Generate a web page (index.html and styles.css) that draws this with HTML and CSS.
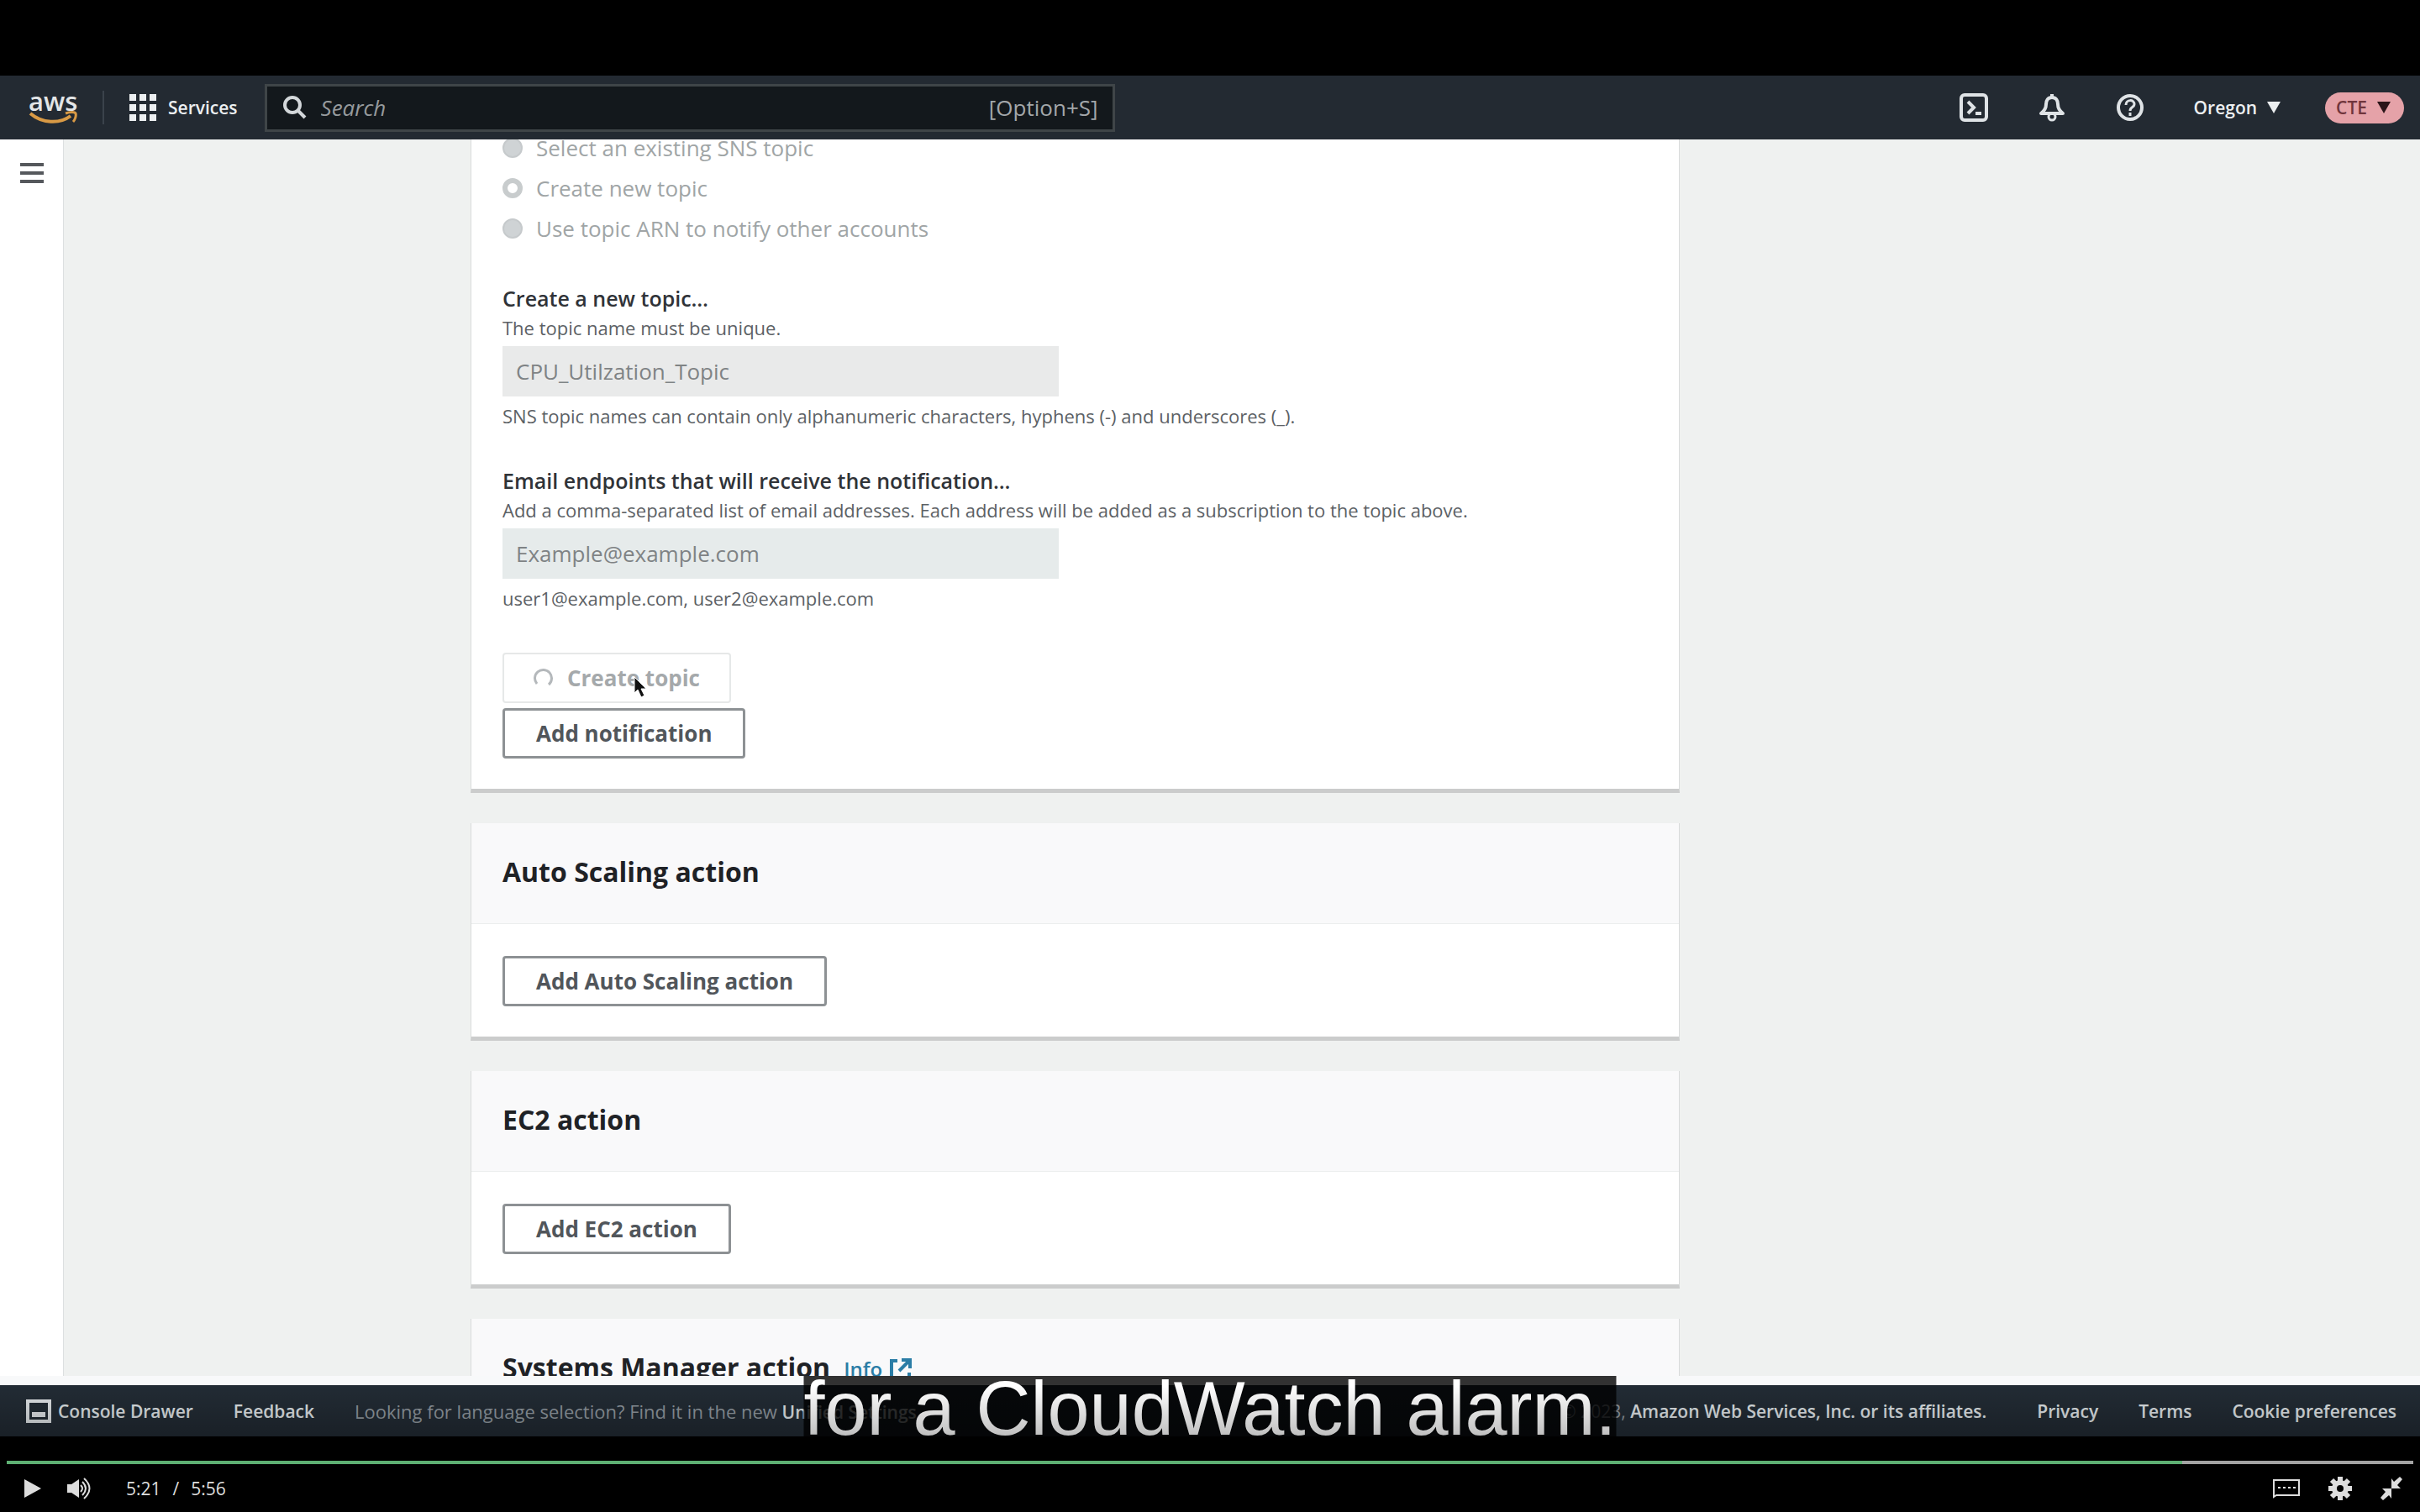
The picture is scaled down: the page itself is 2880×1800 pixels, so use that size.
FILE: index.html
```html
<!DOCTYPE html>
<html lang="en">
<head>
<meta charset="utf-8">
<title>CloudWatch alarm – video player</title>
<link rel="stylesheet" href="styles.css">
</head>
<body>
<div class="player">
  <div class="stage">
    <header class="nav">
      <a class="logo" href="#" aria-label="AWS home">
        <span class="logo-text">aws</span>
        <svg class="logo-smile" viewBox="0 0 58 16" aria-hidden="true"><path d="M2 3C16 15 37 16 50 6" fill="none" stroke="#d99a45" stroke-width="4"/><path d="M44 3c5-2 11-2 12 0 1 3-1 8-3 10" fill="none" stroke="#d99a45" stroke-width="3"/></svg>
      </a>
      <span class="nav-divider"></span>
      <button class="nav-button services" type="button">
        <svg width="32" height="32" viewBox="0 0 32 32" fill="#eceff1" aria-hidden="true"><path d="M0 0h8v8H0zM12 0h8v8h-8zM24 0h8v8h-8zM0 12h8v8H0zM12 12h8v8h-8zM24 12h8v8h-8zM0 24h8v8H0zM12 24h8v8h-8zM24 24h8v8h-8z"/></svg>
        Services
      </button>
      <label class="search">
        <svg width="30" height="30" viewBox="0 0 30 30" fill="none" stroke="#d3d7da" stroke-width="4" aria-hidden="true"><circle cx="12" cy="12" r="9"/><path d="M18 18l9 9"/></svg>
        <input class="search-input" type="text" placeholder="Search" aria-label="Search">
        <span class="search-key">[Option+S]</span>
      </label>
      <div class="nav-tools">
        <button class="nav-button" type="button" aria-label="CloudShell">
          <svg width="34" height="34" viewBox="0 0 34 34" fill="none" stroke="#dfe3e6" stroke-width="4" aria-hidden="true"><rect x="2" y="2" width="30" height="30" rx="4"/><path d="M10 10l7 7-7 7" stroke-width="4"/><path d="M19 24h7" stroke-width="4"/></svg>
        </button>
        <button class="nav-button" type="button" aria-label="Notifications">
          <svg width="34" height="34" viewBox="0 0 34 34" fill="none" stroke="#dfe3e6" stroke-width="4" stroke-linejoin="round" aria-hidden="true"><path d="M17 1v4M17 5c-5 0-7 4-7 8 0 5-2 8-6 11h26c-4-3-6-6-6-11 0-4-2-8-7-8z"/><circle cx="17" cy="28" r="4" stroke-width="3"/></svg>
        </button>
        <button class="nav-button" type="button" aria-label="Help">
          <svg width="34" height="34" viewBox="0 0 34 34" fill="none" stroke="#dfe3e6" stroke-width="4" aria-hidden="true"><circle cx="17" cy="17" r="14"/><path d="M12 14c0-7 10-7 10-1 0 4-5 3-5 8" stroke-width="3"/><path d="M17 23v4" stroke-width="3"/></svg>
        </button>
        <button class="nav-button region" type="button">Oregon
          <svg width="16" height="14" viewBox="0 0 16 14" fill="#eceff1" aria-hidden="true"><path d="M0 0h16L8 14z"/></svg>
        </button>
        <button class="nav-button account" type="button">CTE
          <svg width="16" height="14" viewBox="0 0 16 14" fill="#2a1418" aria-hidden="true"><path d="M0 0h16L8 14z"/></svg>
        </button>
      </div>
    </header>

    <div class="workspace">
      <aside class="rail">
        <button class="menu" type="button" aria-label="Open navigation">
          <svg width="28" height="26" viewBox="0 0 28 26" stroke="#55585c" stroke-width="4" aria-hidden="true"><path d="M0 3h28M0 13h28M0 23h28"/></svg>
        </button>
      </aside>
      <main class="content">
        <div class="cards">
          <section class="card notification">
            <div class="radios">
              <label class="radio-row"><input class="radio" type="radio" name="topic" disabled>Select an existing SNS topic</label>
              <label class="radio-row"><input class="radio" type="radio" name="topic" checked disabled>Create new topic</label>
              <label class="radio-row"><input class="radio" type="radio" name="topic" disabled>Use topic ARN to notify other accounts</label>
            </div>
            <div class="field">
              <label class="field-label" for="topic-name">Create a new topic…</label>
              <p class="field-note">The topic name must be unique.</p>
              <input class="field-input" id="topic-name" type="text" value="CPU_Utilzation_Topic" disabled>
              <p class="field-hint">SNS topic names can contain only alphanumeric characters, hyphens (-) and underscores (_).</p>
            </div>
            <div class="field">
              <label class="field-label" for="emails">Email endpoints that will receive the notification…</label>
              <p class="field-note">Add a comma-separated list of email addresses. Each address will be added as a subscription to the topic above.</p>
              <input class="field-input tinted" id="emails" type="text" value="Example@example.com" disabled>
              <p class="field-hint">user1@example.com, user2@example.com</p>
            </div>
            <div class="actions">
              <button class="button loading" type="button" disabled>
                <svg width="24" height="24" viewBox="0 0 24 24" fill="none" stroke="#b4b8bb" stroke-width="3" aria-hidden="true"><path d="M4 19A10 10 0 1 1 18 20"/></svg>
                Create topic
                <svg class="cursor" width="16" height="26" viewBox="0 0 16 26" aria-hidden="true"><path d="M1 1v19l4-4 4 9 4-2-4-8h6z" fill="#111" stroke="#fff" stroke-width="1"/></svg>
              </button>
              <button class="button" type="button">Add notification</button>
            </div>
          </section>
          <section class="card">
            <div class="card-head"><h2 class="card-title">Auto Scaling action</h2></div>
            <div class="card-body"><button class="button" type="button">Add Auto Scaling action</button></div>
          </section>
          <section class="card">
            <div class="card-head"><h2 class="card-title">EC2 action</h2></div>
            <div class="card-body"><button class="button" type="button">Add EC2 action</button></div>
          </section>
          <section class="card">
            <div class="card-head">
              <h2 class="card-title">Systems Manager action</h2>
              <a class="info" href="#">Info
                <svg width="28" height="28" viewBox="0 0 28 28" fill="none" stroke="#2b7da6" stroke-width="4" aria-hidden="true"><path d="M10 4H3v21h21v-7M15 3h10v10M25 3L12 16"/></svg>
              </a>
            </div>
          </section>
        </div>
      </main>
    </div>

    <footer class="footer">
      <button class="drawer" type="button">
        <svg width="30" height="28" viewBox="0 0 30 28" fill="none" stroke="#dfe3e6" stroke-width="4" aria-hidden="true"><rect x="2" y="2" width="26" height="24"/><path d="M7 18h16" stroke-width="6"/></svg>
        Console Drawer
      </button>
      <a class="footer-link" href="#">Feedback</a>
      <p class="language">Looking for language selection? Find it in the new <a class="footer-link" href="#">Unified Settings</a></p>
      <p class="legal"><span class="year">© 2023,</span> Amazon Web Services, Inc. or its affiliates.</p>
      <a class="footer-link" href="#">Privacy</a>
      <a class="footer-link" href="#">Terms</a>
      <a class="footer-link" href="#">Cookie preferences</a>
    </footer>

    <p class="caption">for a CloudWatch alarm.</p>
    <div class="shade"></div>
  </div>

  <div class="controls">
    <input class="seek" type="range" min="0" max="100" value="90" aria-label="Seek" style="--played: 90.4%">
    <div class="control-row">
      <button class="control" type="button" aria-label="Play">
        <svg width="20" height="24" viewBox="0 0 20 24" fill="#ddd" aria-hidden="true"><path d="M0 1l20 11L0 23z"/></svg>
      </button>
      <button class="control volume" type="button" aria-label="Mute">
        <svg width="30" height="26" viewBox="0 0 30 26" fill="#ddd" aria-hidden="true"><path d="M0 8h5l9-6v22l-9-6H0z"/><g fill="none" stroke="#ddd" stroke-width="2"><path d="M16 9q4 4 0 8M18 5q8 8 0 16M20 1q13 12 0 24"/></g></svg>
      </button>
      <p class="time"><span>5:21</span><span>/</span><span>5:56</span></p>
      <button class="control captions" type="button" aria-label="Captions">
        <svg width="32" height="24" viewBox="0 0 32 24" aria-hidden="true"><path d="M1 22V2h30v18H4z" fill="none" stroke="#ddd" stroke-width="2"/><path d="M6 10h3v2H6zM12 10h3v2h-3zM18 10h3v2h-3zM24 10h3v2h-3z" fill="#ddd"/></svg>
      </button>
      <button class="control" type="button" aria-label="Settings">
        <svg width="28" height="28" viewBox="0 0 28 28" aria-hidden="true"><g stroke="#ddd" stroke-width="6"><path d="M14 0v28M0 14h28M4 4l20 20M24 4L4 24"/></g><circle cx="14" cy="14" r="10" fill="#ddd"/><circle cx="14" cy="14" r="4" fill="#000"/></svg>
      </button>
      <button class="control" type="button" aria-label="Exit full screen">
        <svg width="26" height="28" viewBox="0 0 26 28" fill="#ddd" aria-hidden="true"><path d="M13 2v12h11l-4-4 6-7-3-3-7 6zM13 26V14H2l4 4-6 7 3 3 7-6z"/></svg>
      </button>
    </div>
  </div>
</div>
</body>
</html>
```
FILE: styles.css
```css
* {
  box-sizing: border-box;
}

body {
  margin: 0;
  background: #000;
  font-family: "Open Sans", "Noto Sans", sans-serif;
  font-size: 26px;
}

p,
h2 {
  margin: 0;
}

button {
  margin: 0;
  font-family: inherit;
  cursor: pointer;
}

a {
  text-decoration: none;
}

svg {
  display: block;
  flex: none;
}

.player {
  display: flex;
  flex-direction: column;
  height: 100vh;
  padding-top: 90px;
  overflow: hidden;
}

.stage {
  position: relative;
  display: flex;
  flex: 1;
  flex-direction: column;
  min-height: 0;
}

/* Console navigation bar */
.nav {
  display: flex;
  align-items: center;
  height: 76px;
  padding: 0 19px 0 34px;
  background: #232a32;
}

.logo {
  display: flex;
  flex-direction: column;
  width: 58px;
  color: #e3e6e8;
}

.logo-text {
  font-size: 31px;
  font-weight: 600;
  line-height: 24px;
}

.logo-smile {
  width: 58px;
  height: 16px;
}

.nav-divider {
  width: 2px;
  height: 40px;
  margin: 0 30px;
  background: #3a424b;
}

.nav-button {
  display: flex;
  align-items: center;
  padding: 0;
  border: 0;
  background: none;
  color: #eceff1;
  font-size: 21px;
  font-weight: 600;
  line-height: 32px;
}

.services {
  gap: 14px;
}

.search {
  display: flex;
  flex: 0 1 1012px;
  align-items: center;
  height: 57px;
  margin-left: 32px;
  padding: 0 17px 0 18px;
  border: 3px solid #3f4548;
  background: #13181c;
  color: #a3a7aa;
}

.search-input {
  flex: 1;
  min-width: 0;
  margin-left: 16px;
  padding: 0;
  border: 0;
  outline: 0;
  background: none;
  color: inherit;
  font: inherit;
}

.search-input::placeholder {
  color: #969a9d;
  font-style: italic;
  opacity: 1;
}

.nav-tools {
  display: flex;
  align-items: center;
  gap: 59px;
  margin-left: auto;
}

.region {
  gap: 12px;
}

.account {
  gap: 12px;
  height: 37px;
  margin-left: -6px;
  padding: 0 16px 0 13px;
  border-radius: 19px;
  background: #e5a2a8;
  color: #70353c;
}

/* Page area */
.workspace {
  display: flex;
  flex: 1;
  min-height: 0;
  border-bottom: 11px solid #f8f9fa;
  background: #eff1f0;
}

.rail {
  width: 76px;
  border-right: 1px solid #dcdfe0;
  background: #fff;
}

.menu {
  padding: 27px 24px;
  border: 0;
  background: none;
}

.content {
  display: grid;
  flex: 1;
  grid-template-columns: 484fr 1439fr 881fr;
  overflow: hidden;
}

.cards {
  display: flex;
  flex-direction: column;
  grid-column: 2;
  gap: 36px;
  min-width: 0;
}

.card {
  flex: none;
  border-right: 1px solid #d9dbdb;
  border-bottom: 5px solid #cbcccc;
  border-left: 1px solid #d9dbdb;
  background: #fff;
}

/* The page is scrolled, so this card starts above the visible area */
.notification {
  margin-top: -8px;
  padding: 0 37px 36px;
}

.card-head {
  display: flex;
  gap: 16px;
  align-items: center;
  height: 120px;
  padding: 0 37px 4px;
  border-bottom: 1px solid #eceeee;
  background: #f9f9fa;
}

.card-title {
  color: #1f2226;
  font-size: 32px;
  font-weight: 700;
  line-height: 40px;
}

.card-body {
  padding: 38px 37px 36px;
}

.info {
  display: flex;
  gap: 8px;
  align-items: center;
  padding-top: 4px;
  color: #2b7da6;
  font-size: 24px;
  font-weight: 600;
}

.radios {
  display: flex;
  flex-direction: column;
  gap: 12px;
}

.radio-row {
  display: flex;
  gap: 16px;
  align-items: center;
  color: #a0a5a6;
  line-height: 36px;
}

.radio {
  width: 24px;
  height: 24px;
  margin: 0;
  border: 2px solid #c6cacc;
  border-radius: 50%;
  appearance: none;
  background: #cfd3d5;
}

.radio:checked {
  border: 6px solid #c8cccd;
  background: #fff;
}

.field {
  margin-top: 42px;
}

.radios + .field {
  margin-top: 47px;
}

.field-label {
  display: block;
  color: #303338;
  font-size: 25px;
  font-weight: 600;
  line-height: 36px;
}

.field-note,
.field-hint {
  color: #5c6165;
  font-size: 22px;
  line-height: 34px;
}

.field-input {
  display: block;
  width: 662px;
  height: 60px;
  margin: 5px 0 6px;
  padding: 0 16px;
  border: 0;
  background: #e9eaea;
  color: #7f8385;
  font: inherit;
}

.tinted {
  background: #e6ebeb;
}

.actions {
  display: flex;
  flex-direction: column;
  gap: 6px;
  align-items: flex-start;
  margin-top: 48px;
}

.button {
  display: flex;
  align-items: center;
  height: 60px;
  padding: 0 37px;
  border: 3px solid #8d9194;
  border-radius: 4px;
  background: #fff;
  color: #51565b;
  font-size: 26px;
  font-weight: 700;
}

.loading {
  position: relative;
  gap: 16px;
  padding: 0 35px;
  border: 2px solid #e6e8e8;
  color: #a5a9ab;
}

.cursor {
  position: absolute;
  top: 26px;
  left: 154px;
}

/* Console footer */
.footer {
  display: flex;
  gap: 48px;
  align-items: center;
  height: 61px;
  padding: 0 28px 0 31px;
  background: #222b34;
  color: #dfe3e6;
  font-size: 21px;
  font-weight: 600;
  white-space: nowrap;
}

.drawer {
  display: flex;
  gap: 8px;
  align-items: center;
  padding: 0;
  border: 0;
  background: none;
  color: inherit;
  font-size: inherit;
  font-weight: inherit;
}

.footer-link {
  color: inherit;
}

.language {
  color: #8f979e;
  font-size: 22px;
  font-weight: 400;
}

.language .footer-link {
  color: #dfe3e6;
  font-size: 21px;
  font-weight: 600;
}

.legal {
  margin: 0 12px 0 auto;
}

.year {
  color: #8f979e;
  font-weight: 400;
}

/* Caption and the darkening behind the player controls */
.caption {
  position: absolute;
  bottom: -6px;
  left: 50%;
  height: 78px;
  background: rgba(0, 0, 0, 0.8);
  color: #fff;
  font-family: "Liberation Sans", Arial, sans-serif;
  font-size: 90px;
  line-height: 78px;
  white-space: nowrap;
  transform: translateX(-50%);
}

.shade {
  position: absolute;
  right: 0;
  bottom: 0;
  left: 0;
  height: 60px;
  background: linear-gradient(rgba(0, 0, 0, 0), rgba(0, 0, 0, 0.25));
  pointer-events: none;
}

/* Player controls */
.controls {
  position: relative;
  padding: 29px 8px 0;
  background: #000;
}

.seek {
  display: block;
  width: 100%;
  height: 4px;
  margin: 0;
  appearance: none;
  background: linear-gradient(to right, #5eb073 var(--played), #a3a3a3 var(--played));
}

.seek::-webkit-slider-thumb {
  width: 0;
  height: 4px;
  appearance: none;
}

.control-row {
  display: flex;
  gap: 34px;
  align-items: center;
  height: 57px;
  padding: 0 13px 0 21px;
}

.control {
  padding: 0;
  border: 0;
  background: none;
}

.volume {
  margin-left: -3px;
}

.time {
  display: flex;
  gap: 14px;
  margin-left: 6px;
  color: #ddd;
  font-size: 21px;
}

.captions {
  margin-left: auto;
}
```
